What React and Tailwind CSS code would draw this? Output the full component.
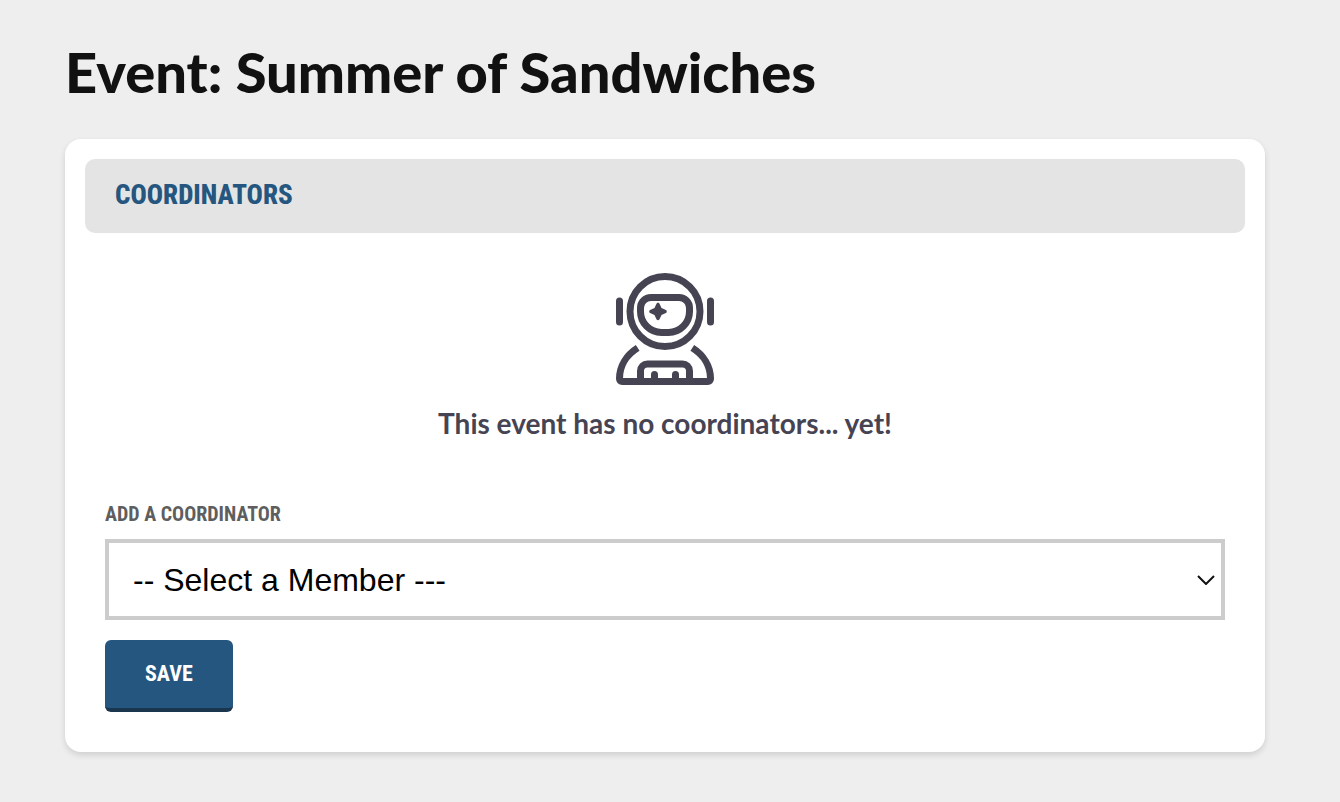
import { useState } from "react";

function Astronaut() {
  return (
    <svg
      className="h-[112px] w-[98px]"
      viewBox="0 0 28 32"
      fill="none"
      stroke="currentColor"
      strokeWidth="2"
      aria-hidden="true"
    >
      <circle cx="14" cy="11" r="10" />
      <path d="M1 8v6M27 8v6" strokeLinecap="round" />
      <path d="M10 7h8a3 3 0 0 1 3 3v1a6 6 0 0 1-6 6h-2a6 6 0 0 1-6-6v-1a3 3 0 0 1 3-3z" />
      <path
        d="M12 8.500c.3 0 .4.2.5.4l.5 1.100 1.100.5c.2.1.4.2.4.5s-.2.4-.4.5l-1.100.5-.5 1.100c-.1.2-.2.4-.5.4s-.4-.2-.5-.4l-.5-1.100-1.100-.5c-.2-.1-.4-.2-.4-.5s.2-.4.4-.5l1.100-.5.5-1.100c.1-.2.2-.4.5-.4z"
        fill="currentColor"
        stroke="none"
      />
      <path d="M6.200 21.400C3 23.400 1 26.600 1 30.200c0 .5.3.8.8.8h24.400c.5 0 .8-.3.8-.8 0-3.600-2-6.800-5.200-8.800" />
      <path d="M7 30.500V28a2 2 0 0 1 2-2h10a2 2 0 0 1 2 2v2.500" />
      <path d="M11 30.500V29M17 30.500V29" strokeLinecap="round" />
    </svg>
  );
}

export default function App() {
  const [member, setMember] = useState("");

  return (
    <main className="min-h-screen bg-[#eee] pt-10 pr-[75px] pb-[50px] pl-[65px] font-['Lato',sans-serif]">
      <div className="max-w-[1200px]">
        <h1 className="mb-[35px] font-['Lato_Black','Lato',sans-serif] text-[56px] leading-[64px] font-black text-[#111]">
          Event: Summer of Sandwiches
        </h1>
        <section className="rounded-2xl bg-white p-5 pb-10 shadow-[0_3px_6px_rgba(0,0,0,0.13)]">
          <h2 className="rounded-[10px] bg-[#e4e4e4] px-[30px] pt-4 pb-[18px] font-['Roboto_Condensed','Liberation_Sans_Narrow','Liberation_Sans',sans-serif] text-[27px] leading-10 font-extrabold text-[#25567f] uppercase">
            Coordinators
          </h2>
          <div className="flex flex-col items-center pt-10 text-[#464453]">
            <Astronaut />
            <p className="mt-[18px] text-[28px] leading-10 font-bold">
              This event has no coordinators... yet!
            </p>
          </div>
          <form className="px-5 pt-14" onSubmit={(e) => e.preventDefault()}>
            <label
              htmlFor="member"
              className="mb-2.5 block font-['Roboto_Condensed','Liberation_Sans_Narrow','Liberation_Sans',sans-serif] text-xl leading-[30px] font-bold text-[#5e5e5e] uppercase"
            >
              Add a coordinator
            </label>
            <div className="grid items-center">
              <select
                id="member"
                value={member}
                onChange={(e) => setMember(e.target.value)}
                className="col-start-1 row-start-1 h-[81px] w-full appearance-none rounded-none border-4 border-[#ccc] bg-white pr-12 pl-6 font-['Liberation_Sans',sans-serif] text-[32px] leading-10 text-black"
              >
                <option value="">-- Select a Member ---</option>
              </select>
              <svg
                className="pointer-events-none col-start-1 row-start-1 mr-2.5 h-2.5 w-[18px] justify-self-end"
                viewBox="0 0 18 10"
                fill="none"
                stroke="#111"
                strokeWidth="2"
                aria-hidden="true"
              >
                <path d="M1 1l8 8 8-8" />
              </svg>
            </div>
            <button
              type="submit"
              className="mt-5 rounded-md border-b-4 border-[#1a364f] bg-[#25567f] px-10 py-[18px] font-['Roboto_Condensed','Liberation_Sans_Narrow','Liberation_Sans',sans-serif] text-[22px] leading-8 font-bold text-white uppercase"
            >
              Save
            </button>
          </form>
        </section>
      </div>
    </main>
  );
}
